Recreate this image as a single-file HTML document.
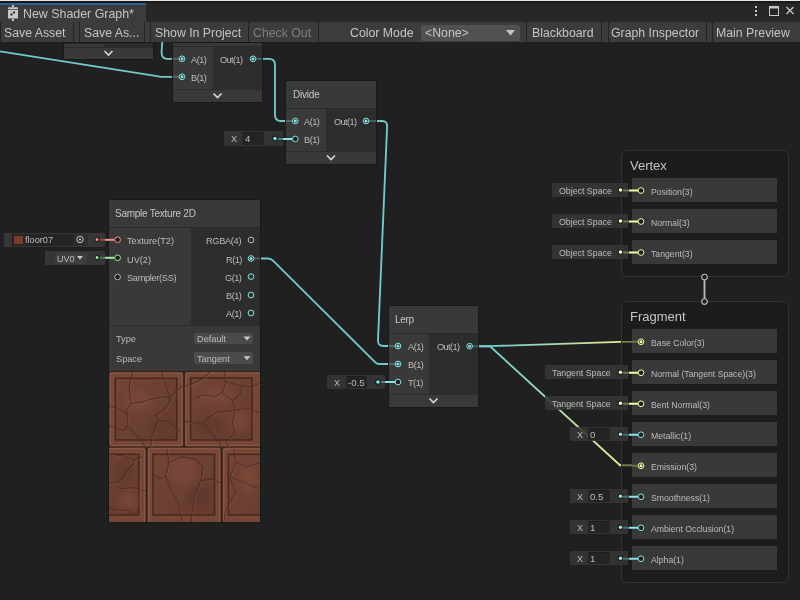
<!DOCTYPE html>
<html><head><meta charset="utf-8"><style>
html,body{margin:0;padding:0;width:800px;height:600px;overflow:hidden;background:#202020;font-family:"Liberation Sans", sans-serif;}
#g div, #top div{position:absolute;box-sizing:border-box;}
body{-webkit-font-smoothing:antialiased;}
.t{white-space:nowrap;will-change:transform;}
svg{position:absolute;left:0;top:0;}
</style></head><body>
<div id="g" style="position:absolute;left:0;top:0;width:800px;height:600px;">
<svg width="800" height="600" style="z-index:1"><defs><linearGradient id="g1" x1="490" y1="0" x2="620" y2="0" gradientUnits="userSpaceOnUse"><stop offset="0" stop-color="#70cbcf"/><stop offset="1" stop-color="#e2ea8e"/></linearGradient><linearGradient id="g2" x1="490" y1="346" x2="620" y2="465" gradientUnits="userSpaceOnUse"><stop offset="0" stop-color="#70cbcf"/><stop offset="1" stop-color="#e2ea8e"/></linearGradient></defs><path d="M0 51.3 L157 76.2 Q159 76.8 161 76.8 L173 76.8" fill="none" stroke="#70cbcf" stroke-width="1.85" stroke-linejoin="round"/><path d="M162.4 40 L161.6 52 Q161.4 58.8 167 58.8 L173 58.8" fill="none" stroke="#70cbcf" stroke-width="1.85" stroke-linejoin="round"/><path d="M262 58.8 L269 58.8 Q275 58.8 275 64.8 L275 115 Q275 121 281 121 L286 121" fill="none" stroke="#70cbcf" stroke-width="1.85" stroke-linejoin="round"/><path d="M376 121 L382 121 Q387.3 121 387.1 126.5 L378 340 Q377.8 346 383.5 346 L389 346" fill="none" stroke="#70cbcf" stroke-width="1.85" stroke-linejoin="round"/><path d="M260 258.5 L268 258.5 Q271 258.5 273 260.7 L374.8 361.8 Q376.8 364 379.8 364 L389 364" fill="none" stroke="#70cbcf" stroke-width="1.85" stroke-linejoin="round"/><path d="M478 346.2 L490 346.2 L620 341.8 L632 341.8" fill="none" stroke="url(#g1)" stroke-width="1.85" stroke-linejoin="round"/><path d="M478 346.2 L490 346.2 L620 465.2 L632 465.2" fill="none" stroke="url(#g2)" stroke-width="1.85" stroke-linejoin="round"/></svg>
<div style="position:absolute;left:0;top:0;width:800px;height:600px;z-index:2">
<div style="left:63px;top:42px;width:91px;height:18px;background:#191919;"></div><div style="left:64px;top:43px;width:40px;height:4px;background:#393939;"></div><div style="left:104px;top:43px;width:49px;height:4px;background:#2d2d2d;"></div><div style="left:64px;top:43px;width:89px;height:1px;background:#2a2a2a;"></div><div style="left:64px;top:47px;width:89px;height:12px;background:#393939;"></div><div style="left:64px;top:47px;width:89px;height:1px;background:#2c2c2c;"></div><div style="left:172px;top:42px;width:91px;height:61px;background:#191919;"></div><div style="left:173px;top:43px;width:89px;height:3px;background:#393939;"></div><div style="left:173px;top:46px;width:40px;height:43px;background:#393939;"></div><div style="left:213px;top:46px;width:49px;height:43px;background:#2d2d2d;"></div><div style="left:173px;top:46px;width:89px;height:1px;background:#2a2a2a;"></div><div style="left:173px;top:89px;width:89px;height:13px;background:#393939;"></div><div style="left:173px;top:89px;width:89px;height:1px;background:#2c2c2c;"></div><div class="t" style="left:191px;top:52.30px;font-size:9.2px;line-height:16px;color:#bcbcbc;letter-spacing:-0.5px;">A(1)</div><div class="t" style="left:191px;top:70.30px;font-size:9.2px;line-height:16px;color:#bcbcbc;letter-spacing:-0.5px;">B(1)</div><div class="t" style="left:220px;top:52.30px;font-size:9.2px;line-height:16px;color:#bcbcbc;letter-spacing:-0.6px;">Out(1)</div><div style="left:285px;top:80px;width:92px;height:85px;background:#191919;"></div><div style="left:286px;top:81px;width:90px;height:27px;background:#393939;"></div><div style="left:286px;top:108px;width:40px;height:43px;background:#393939;"></div><div style="left:326px;top:108px;width:50px;height:43px;background:#2d2d2d;"></div><div style="left:286px;top:108px;width:90px;height:1px;background:#2a2a2a;"></div><div style="left:286px;top:151px;width:90px;height:13px;background:#393939;"></div><div style="left:286px;top:151px;width:90px;height:1px;background:#2c2c2c;"></div><div class="t" style="left:292.7px;top:87.30px;font-size:10px;line-height:16px;color:#c4c4c4;letter-spacing:-0.2px;">Divide</div><div class="t" style="left:304px;top:114.30px;font-size:9.2px;line-height:16px;color:#bcbcbc;letter-spacing:-0.5px;">A(1)</div><div class="t" style="left:304px;top:132.30px;font-size:9.2px;line-height:16px;color:#bcbcbc;letter-spacing:-0.5px;">B(1)</div><div class="t" style="left:334px;top:114.30px;font-size:9.2px;line-height:16px;color:#bcbcbc;letter-spacing:-0.6px;">Out(1)</div><div style="left:388px;top:305px;width:91px;height:103px;background:#191919;"></div><div style="left:389px;top:306px;width:89px;height:27px;background:#393939;"></div><div style="left:389px;top:333px;width:40px;height:61px;background:#393939;"></div><div style="left:429px;top:333px;width:49px;height:61px;background:#2d2d2d;"></div><div style="left:389px;top:333px;width:89px;height:1px;background:#2a2a2a;"></div><div style="left:389px;top:394px;width:89px;height:13px;background:#393939;"></div><div style="left:389px;top:394px;width:89px;height:1px;background:#2c2c2c;"></div><div class="t" style="left:395.3px;top:312.30px;font-size:10px;line-height:16px;color:#c4c4c4;letter-spacing:-0.3px;">Lerp</div><div class="t" style="left:408px;top:339.30px;font-size:9.2px;line-height:16px;color:#bcbcbc;letter-spacing:-0.5px;">A(1)</div><div class="t" style="left:408px;top:357.30px;font-size:9.2px;line-height:16px;color:#bcbcbc;letter-spacing:-0.5px;">B(1)</div><div class="t" style="left:408px;top:375.30px;font-size:9.2px;line-height:16px;color:#bcbcbc;letter-spacing:-0.5px;">T(1)</div><div class="t" style="left:437px;top:339.30px;font-size:9.2px;line-height:16px;color:#bcbcbc;letter-spacing:-0.6px;">Out(1)</div><div style="left:108px;top:199px;width:153px;height:324px;background:#191919;"></div><div style="left:109px;top:200px;width:151px;height:27px;background:#393939;"></div><div style="left:109px;top:227px;width:82px;height:98px;background:#393939;"></div><div style="left:191px;top:227px;width:69px;height:98px;background:#2d2d2d;"></div><div style="left:109px;top:227px;width:151px;height:1px;background:#2a2a2a;"></div><div style="left:109px;top:325px;width:151px;height:46px;background:#393939;"></div><div style="left:109px;top:325px;width:151px;height:1px;background:#2c2c2c;"></div><div class="t" style="left:114.6px;top:206.40px;font-size:10px;line-height:16px;color:#c4c4c4;letter-spacing:-0.25px;">Sample Texture 2D</div><div class="t" style="left:127px;top:233.30px;font-size:9.2px;line-height:16px;color:#bcbcbc;">Texture(T2)</div><div class="t" style="left:127px;top:251.80px;font-size:9.2px;line-height:16px;color:#bcbcbc;">UV(2)</div><div class="t" style="left:127px;top:270.30px;font-size:9.2px;line-height:16px;color:#bcbcbc;letter-spacing:-0.3px;">Sampler(SS)</div><div class="t" style="right:558.5px;top:233.30px;font-size:9.2px;line-height:16px;color:#bcbcbc;letter-spacing:-0.3px;">RGBA(4)</div><div class="t" style="right:558.5px;top:251.80px;font-size:9.2px;line-height:16px;color:#bcbcbc;letter-spacing:-0.5px;">R(1)</div><div class="t" style="right:558.5px;top:269.80px;font-size:9.2px;line-height:16px;color:#bcbcbc;letter-spacing:-0.5px;">G(1)</div><div class="t" style="right:558.5px;top:288.30px;font-size:9.2px;line-height:16px;color:#bcbcbc;letter-spacing:-0.5px;">B(1)</div><div class="t" style="right:558.5px;top:306.30px;font-size:9.2px;line-height:16px;color:#bcbcbc;letter-spacing:-0.5px;">A(1)</div><div class="t" style="left:116px;top:331.20px;font-size:9.2px;line-height:16px;color:#bcbcbc;">Type</div><div class="t" style="left:116px;top:350.80px;font-size:9.2px;line-height:16px;color:#bcbcbc;">Space</div><div style="left:194px;top:332.6px;width:59px;height:11.5px;background:#4b4b4b;border-radius:2px;"></div><div class="t" style="left:197px;top:331.00px;font-size:9.2px;line-height:16px;color:#bcbcbc;">Default</div><div style="left:194px;top:352.2px;width:59px;height:11.5px;background:#4b4b4b;border-radius:2px;"></div><div class="t" style="left:197px;top:350.60px;font-size:9.2px;line-height:16px;color:#bcbcbc;">Tangent</div><svg width="151" height="151" style="left:109px;top:371px"><defs><filter id="tb" filterUnits="userSpaceOnUse" x="-10" y="-10" width="171" height="171"><feGaussianBlur stdDeviation="0.55"/></filter><filter id="tb2" filterUnits="userSpaceOnUse" x="-10" y="-10" width="171" height="171"><feGaussianBlur stdDeviation="3"/></filter><linearGradient id="tg" x1="0" y1="0" x2="1" y2="1"><stop offset="0" stop-color="#734536"/><stop offset="1" stop-color="#663b2e"/></linearGradient></defs><g filter="url(#tb)"><rect x="0" y="0" width="151" height="151" fill="#33201a"/><rect x="0.3" y="1" width="73.9" height="74.6" rx="2" fill="#744436"/><rect x="1.5" y="2.2" width="71.5" height="72.19999999999999" rx="2" fill="none" stroke="#93604f" stroke-width="1.3" stroke-opacity="0.75"/><rect x="4.3" y="5.3" width="65.4" height="65.7" fill="none" stroke="#7f4b3d" stroke-width="1.1"/><rect x="6.3" y="7.3" width="61.400000000000006" height="61.7" fill="url(#tg)"/><rect x="6.3" y="7.3" width="61.400000000000006" height="61.7" fill="none" stroke="#45291f" stroke-width="1.5"/><rect x="75.8" y="1" width="77.2" height="74.6" rx="2" fill="#744436"/><rect x="77.0" y="2.2" width="74.8" height="72.19999999999999" rx="2" fill="none" stroke="#93604f" stroke-width="1.3" stroke-opacity="0.75"/><rect x="79.7" y="5" width="65.3" height="66" fill="none" stroke="#7f4b3d" stroke-width="1.1"/><rect x="81.7" y="7" width="61.3" height="62" fill="url(#tg)"/><rect x="81.7" y="7" width="61.3" height="62" fill="none" stroke="#45291f" stroke-width="1.5"/><rect x="-30" y="76.6" width="66.7" height="76.4" rx="2" fill="#744436"/><rect x="-28.8" y="77.8" width="64.3" height="74.0" rx="2" fill="none" stroke="#93604f" stroke-width="1.3" stroke-opacity="0.75"/><rect x="-26" y="81.3" width="57.7" height="64.7" fill="none" stroke="#7f4b3d" stroke-width="1.1"/><rect x="-24" y="83.3" width="53.7" height="60.7" fill="url(#tg)"/><rect x="-24" y="83.3" width="53.7" height="60.7" fill="none" stroke="#45291f" stroke-width="1.5"/><rect x="38.5" y="76.6" width="73.2" height="76.4" rx="2" fill="#744436"/><rect x="39.7" y="77.8" width="70.8" height="74.0" rx="2" fill="none" stroke="#93604f" stroke-width="1.3" stroke-opacity="0.75"/><rect x="41.9" y="81.3" width="65.6" height="64.7" fill="none" stroke="#7f4b3d" stroke-width="1.1"/><rect x="43.9" y="83.3" width="61.6" height="60.7" fill="url(#tg)"/><rect x="43.9" y="83.3" width="61.6" height="60.7" fill="none" stroke="#45291f" stroke-width="1.5"/><rect x="113.6" y="76.6" width="76.4" height="76.4" rx="2" fill="#744436"/><rect x="114.8" y="77.8" width="74.0" height="74.0" rx="2" fill="none" stroke="#93604f" stroke-width="1.3" stroke-opacity="0.75"/><rect x="117.4" y="81.3" width="65.6" height="64.7" fill="none" stroke="#7f4b3d" stroke-width="1.1"/><rect x="119.4" y="83.3" width="61.599999999999994" height="60.7" fill="url(#tg)"/><rect x="119.4" y="83.3" width="61.599999999999994" height="60.7" fill="none" stroke="#45291f" stroke-width="1.5"/></g><g filter="url(#tb2)" opacity="0.7"><ellipse cx="30" cy="30" rx="14" ry="10" fill="#7d4a3c"/><ellipse cx="50" cy="55" rx="10" ry="8" fill="#5f372b"/><ellipse cx="110" cy="25" rx="16" ry="9" fill="#7b493b"/><ellipse cx="100" cy="55" rx="14" ry="10" fill="#60382c"/><ellipse cx="130" cy="50" rx="10" ry="12" fill="#7a483a"/><ellipse cx="15" cy="100" rx="10" ry="12" fill="#60382c"/><ellipse cx="75" cy="100" rx="12" ry="15" fill="#7d4a3c"/><ellipse cx="90" cy="125" rx="12" ry="10" fill="#5d362a"/><ellipse cx="140" cy="110" rx="9" ry="14" fill="#7b493b"/><ellipse cx="20" cy="130" rx="10" ry="8" fill="#7d4a3c"/></g><g transform="translate(0.9,0.9)" filter="url(#tb)"><path d="M24 1 L20.3 13.7 L21 25.7 L22.3 32.3 L17.7 39 L19 55 L25.7 63 L33.7 71.7 L36 76" fill="none" stroke="#98624f" stroke-width="0.9" stroke-opacity="0.45" stroke-linejoin="round"/><path d="M52.3 1 L57.7 16.3 L61.7 29.7 L55 39 L47 44.3 L49.7 49.7 L43 65.7 L41.7 76" fill="none" stroke="#98624f" stroke-width="0.9" stroke-opacity="0.45" stroke-linejoin="round"/><path d="M22.3 32.3 L33.7 31 L44.3 27.7 L57.7 25.7 L61.7 29.7" fill="none" stroke="#98624f" stroke-width="0.9" stroke-opacity="0.45" stroke-linejoin="round"/><path d="M0 35 L11 39 L17.7 43" fill="none" stroke="#98624f" stroke-width="0.9" stroke-opacity="0.45" stroke-linejoin="round"/><path d="M0 55 L7 57.7 L15 60 L19 55" fill="none" stroke="#98624f" stroke-width="0.9" stroke-opacity="0.45" stroke-linejoin="round"/><path d="M61.7 25.7 L67 20 L74 15" fill="none" stroke="#98624f" stroke-width="0.9" stroke-opacity="0.45" stroke-linejoin="round"/><path d="M49.7 49.7 L60.3 51 L71 60.3" fill="none" stroke="#98624f" stroke-width="0.9" stroke-opacity="0.45" stroke-linejoin="round"/><path d="M101 1 L93 8.3 L81 13.7 L74 16" fill="none" stroke="#98624f" stroke-width="0.9" stroke-opacity="0.45" stroke-linejoin="round"/><path d="M115.7 1 L117 12.3 L113 21.7 L106.3 25.7 L95 24 L85 28" fill="none" stroke="#98624f" stroke-width="0.9" stroke-opacity="0.45" stroke-linejoin="round"/><path d="M76 50 L81 51 L93 53.7 L99.7 47 L107.7 41.7 L118.3 40.3 L127.7 39 L139.7 37.7 L150.3 41.7" fill="none" stroke="#98624f" stroke-width="0.9" stroke-opacity="0.45" stroke-linejoin="round"/><path d="M126.3 39 L123.7 52.3 L126.3 61.7 L117 71 L119.7 76" fill="none" stroke="#98624f" stroke-width="0.9" stroke-opacity="0.45" stroke-linejoin="round"/><path d="M95.7 53 L102.3 63 L110.3 71 L112 76" fill="none" stroke="#98624f" stroke-width="0.9" stroke-opacity="0.45" stroke-linejoin="round"/><path d="M113 21.7 L123.7 29.7 L131.7 23 L133 15 L142.3 16.3 L151 12" fill="none" stroke="#98624f" stroke-width="0.9" stroke-opacity="0.45" stroke-linejoin="round"/><path d="M117 11 L133 15" fill="none" stroke="#98624f" stroke-width="0.9" stroke-opacity="0.45" stroke-linejoin="round"/><path d="M123.7 29.7 L126.3 37.7" fill="none" stroke="#98624f" stroke-width="0.9" stroke-opacity="0.45" stroke-linejoin="round"/><path d="M0 82.7 L12.3 84.7 L19 87.3 L25.7 88.7 L33.7 86" fill="none" stroke="#98624f" stroke-width="0.9" stroke-opacity="0.45" stroke-linejoin="round"/><path d="M25.7 88.7 L24.3 94 L19 99.3 L13.7 107.3 L9.7 111.3 L0 112.7" fill="none" stroke="#98624f" stroke-width="0.9" stroke-opacity="0.45" stroke-linejoin="round"/><path d="M7 115.3 L12.3 118 L23 116.7 L29.7 118 L36.3 120.7" fill="none" stroke="#98624f" stroke-width="0.9" stroke-opacity="0.45" stroke-linejoin="round"/><path d="M0 136.7 L7 139.3 L17.7 139.3 L25.7 144.7" fill="none" stroke="#98624f" stroke-width="0.9" stroke-opacity="0.45" stroke-linejoin="round"/><path d="M58 78 L60 92 L57 105 L62 118 L70 132 L73 151" fill="none" stroke="#98624f" stroke-width="0.9" stroke-opacity="0.45" stroke-linejoin="round"/><path d="M60 92 L72 86 L86 88 L94 96 L92 110 L86 124 L82 151" fill="none" stroke="#98624f" stroke-width="0.9" stroke-opacity="0.45" stroke-linejoin="round"/><path d="M92 110 L104 108 L111 112" fill="none" stroke="#98624f" stroke-width="0.9" stroke-opacity="0.45" stroke-linejoin="round"/><path d="M44 104 L52 108 L57 105" fill="none" stroke="#98624f" stroke-width="0.9" stroke-opacity="0.45" stroke-linejoin="round"/><path d="M125 78 L127 92 L121 106 L127 122 L117 138 L115 151" fill="none" stroke="#98624f" stroke-width="0.9" stroke-opacity="0.45" stroke-linejoin="round"/><path d="M127 92 L138 96 L151 92" fill="none" stroke="#98624f" stroke-width="0.9" stroke-opacity="0.45" stroke-linejoin="round"/><path d="M121 106 L136 112 L151 118" fill="none" stroke="#98624f" stroke-width="0.9" stroke-opacity="0.45" stroke-linejoin="round"/></g><path d="M24 1 L20.3 13.7 L21 25.7 L22.3 32.3 L17.7 39 L19 55 L25.7 63 L33.7 71.7 L36 76" fill="none" stroke="#4a2b21" stroke-width="1.3" stroke-opacity="0.7" stroke-linejoin="round" filter="url(#tb)"/><path d="M52.3 1 L57.7 16.3 L61.7 29.7 L55 39 L47 44.3 L49.7 49.7 L43 65.7 L41.7 76" fill="none" stroke="#4a2b21" stroke-width="1.3" stroke-opacity="0.7" stroke-linejoin="round" filter="url(#tb)"/><path d="M22.3 32.3 L33.7 31 L44.3 27.7 L57.7 25.7 L61.7 29.7" fill="none" stroke="#4a2b21" stroke-width="1.3" stroke-opacity="0.7" stroke-linejoin="round" filter="url(#tb)"/><path d="M0 35 L11 39 L17.7 43" fill="none" stroke="#4a2b21" stroke-width="1.3" stroke-opacity="0.7" stroke-linejoin="round" filter="url(#tb)"/><path d="M0 55 L7 57.7 L15 60 L19 55" fill="none" stroke="#4a2b21" stroke-width="1.3" stroke-opacity="0.7" stroke-linejoin="round" filter="url(#tb)"/><path d="M61.7 25.7 L67 20 L74 15" fill="none" stroke="#4a2b21" stroke-width="1.3" stroke-opacity="0.7" stroke-linejoin="round" filter="url(#tb)"/><path d="M49.7 49.7 L60.3 51 L71 60.3" fill="none" stroke="#4a2b21" stroke-width="1.3" stroke-opacity="0.7" stroke-linejoin="round" filter="url(#tb)"/><path d="M101 1 L93 8.3 L81 13.7 L74 16" fill="none" stroke="#4a2b21" stroke-width="1.3" stroke-opacity="0.7" stroke-linejoin="round" filter="url(#tb)"/><path d="M115.7 1 L117 12.3 L113 21.7 L106.3 25.7 L95 24 L85 28" fill="none" stroke="#4a2b21" stroke-width="1.3" stroke-opacity="0.7" stroke-linejoin="round" filter="url(#tb)"/><path d="M76 50 L81 51 L93 53.7 L99.7 47 L107.7 41.7 L118.3 40.3 L127.7 39 L139.7 37.7 L150.3 41.7" fill="none" stroke="#4a2b21" stroke-width="1.3" stroke-opacity="0.7" stroke-linejoin="round" filter="url(#tb)"/><path d="M126.3 39 L123.7 52.3 L126.3 61.7 L117 71 L119.7 76" fill="none" stroke="#4a2b21" stroke-width="1.3" stroke-opacity="0.7" stroke-linejoin="round" filter="url(#tb)"/><path d="M95.7 53 L102.3 63 L110.3 71 L112 76" fill="none" stroke="#4a2b21" stroke-width="1.3" stroke-opacity="0.7" stroke-linejoin="round" filter="url(#tb)"/><path d="M113 21.7 L123.7 29.7 L131.7 23 L133 15 L142.3 16.3 L151 12" fill="none" stroke="#4a2b21" stroke-width="1.3" stroke-opacity="0.7" stroke-linejoin="round" filter="url(#tb)"/><path d="M117 11 L133 15" fill="none" stroke="#4a2b21" stroke-width="1.3" stroke-opacity="0.7" stroke-linejoin="round" filter="url(#tb)"/><path d="M123.7 29.7 L126.3 37.7" fill="none" stroke="#4a2b21" stroke-width="1.3" stroke-opacity="0.7" stroke-linejoin="round" filter="url(#tb)"/><path d="M0 82.7 L12.3 84.7 L19 87.3 L25.7 88.7 L33.7 86" fill="none" stroke="#4a2b21" stroke-width="1.3" stroke-opacity="0.7" stroke-linejoin="round" filter="url(#tb)"/><path d="M25.7 88.7 L24.3 94 L19 99.3 L13.7 107.3 L9.7 111.3 L0 112.7" fill="none" stroke="#4a2b21" stroke-width="1.3" stroke-opacity="0.7" stroke-linejoin="round" filter="url(#tb)"/><path d="M7 115.3 L12.3 118 L23 116.7 L29.7 118 L36.3 120.7" fill="none" stroke="#4a2b21" stroke-width="1.3" stroke-opacity="0.7" stroke-linejoin="round" filter="url(#tb)"/><path d="M0 136.7 L7 139.3 L17.7 139.3 L25.7 144.7" fill="none" stroke="#4a2b21" stroke-width="1.3" stroke-opacity="0.7" stroke-linejoin="round" filter="url(#tb)"/><path d="M58 78 L60 92 L57 105 L62 118 L70 132 L73 151" fill="none" stroke="#4a2b21" stroke-width="1.3" stroke-opacity="0.7" stroke-linejoin="round" filter="url(#tb)"/><path d="M60 92 L72 86 L86 88 L94 96 L92 110 L86 124 L82 151" fill="none" stroke="#4a2b21" stroke-width="1.3" stroke-opacity="0.7" stroke-linejoin="round" filter="url(#tb)"/><path d="M92 110 L104 108 L111 112" fill="none" stroke="#4a2b21" stroke-width="1.3" stroke-opacity="0.7" stroke-linejoin="round" filter="url(#tb)"/><path d="M44 104 L52 108 L57 105" fill="none" stroke="#4a2b21" stroke-width="1.3" stroke-opacity="0.7" stroke-linejoin="round" filter="url(#tb)"/><path d="M125 78 L127 92 L121 106 L127 122 L117 138 L115 151" fill="none" stroke="#4a2b21" stroke-width="1.3" stroke-opacity="0.7" stroke-linejoin="round" filter="url(#tb)"/><path d="M127 92 L138 96 L151 92" fill="none" stroke="#4a2b21" stroke-width="1.3" stroke-opacity="0.7" stroke-linejoin="round" filter="url(#tb)"/><path d="M121 106 L136 112 L151 118" fill="none" stroke="#4a2b21" stroke-width="1.3" stroke-opacity="0.7" stroke-linejoin="round" filter="url(#tb)"/></svg><div style="left:224px;top:131px;width:59px;height:15px;background:rgba(54,54,54,0.88);border-radius:1px;"></div><div class="t" style="left:231px;top:131.30px;font-size:9.2px;line-height:16px;color:#bcbcbc;">X</div><div style="left:242px;top:132px;width:22px;height:13px;background:#242424;border-radius:2px;border-top:1px solid #1b1b1b;box-sizing:border-box;"></div><div class="t" style="left:244.5px;top:131.30px;font-size:9.6px;line-height:16px;color:#bcbcbc;">4</div><div style="left:327px;top:375px;width:58px;height:14px;background:rgba(54,54,54,0.88);border-radius:1px;"></div><div class="t" style="left:334px;top:374.80px;font-size:9.2px;line-height:16px;color:#bcbcbc;">X</div><div style="left:345.5px;top:376px;width:21.5px;height:12px;background:#242424;border-radius:2px;border-top:1px solid #1b1b1b;box-sizing:border-box;"></div><div class="t" style="left:348.0px;top:374.80px;font-size:9.6px;line-height:16px;color:#bcbcbc;">-0.5</div><div style="left:4px;top:233px;width:101px;height:14px;background:rgba(56,56,56,0.9);"></div><div style="left:12px;top:234px;width:61px;height:12px;background:#242424;"></div><div style="left:73px;top:234px;width:14.5px;height:12px;background:#2e2e2e;border-radius:2px;"></div><div style="left:14px;top:236px;width:9px;height:8px;background:#75402e;"></div><div class="t" style="left:25px;top:232.20px;font-size:9.2px;line-height:16px;color:#bcbcbc;">floor07</div><div style="left:45px;top:251px;width:60px;height:14px;background:rgba(56,56,56,0.9);"></div><div style="left:54.5px;top:252.5px;width:32.5px;height:11px;background:#3e3e3e;border-radius:2px;"></div><div class="t" style="left:57px;top:250.80px;font-size:9.0px;line-height:16px;color:#bcbcbc;">UV0</div><div style="left:621px;top:149.5px;width:168px;height:127.5px;border:1px solid #333333;border-radius:6px;background:rgba(26,26,26,0.55);"></div><div class="t" style="left:630px;top:157.50px;font-size:13px;line-height:16px;color:#c4c4c4;">Vertex</div><div style="left:621px;top:301px;width:168px;height:281.5px;border:1px solid #333333;border-radius:6px;background:rgba(26,26,26,0.55);"></div><div class="t" style="left:630px;top:309.00px;font-size:13px;line-height:16px;color:#c4c4c4;">Fragment</div><div style="left:632px;top:178px;width:145px;height:24px;background:#393939;"></div><div class="t" style="left:650.5px;top:183.80px;font-size:8.7px;line-height:16px;color:#bcbcbc;">Position(3)</div><div style="left:632px;top:209px;width:145px;height:24px;background:#393939;"></div><div class="t" style="left:650.5px;top:214.80px;font-size:8.7px;line-height:16px;color:#bcbcbc;">Normal(3)</div><div style="left:632px;top:240px;width:145px;height:24px;background:#393939;"></div><div class="t" style="left:650.5px;top:245.80px;font-size:8.7px;line-height:16px;color:#bcbcbc;">Tangent(3)</div><div style="left:632px;top:329px;width:145px;height:24px;background:#393939;"></div><div class="t" style="left:650.5px;top:334.80px;font-size:8.7px;line-height:16px;color:#bcbcbc;">Base Color(3)</div><div style="left:632px;top:360px;width:145px;height:24px;background:#393939;"></div><div class="t" style="left:650.5px;top:365.80px;font-size:8.7px;line-height:16px;color:#bcbcbc;">Normal (Tangent Space)(3)</div><div style="left:632px;top:391px;width:145px;height:24px;background:#393939;"></div><div class="t" style="left:650.5px;top:396.80px;font-size:8.7px;line-height:16px;color:#bcbcbc;">Bent Normal(3)</div><div style="left:632px;top:422px;width:145px;height:24px;background:#393939;"></div><div class="t" style="left:650.5px;top:427.80px;font-size:8.7px;line-height:16px;color:#bcbcbc;">Metallic(1)</div><div style="left:632px;top:453px;width:145px;height:24px;background:#393939;"></div><div class="t" style="left:650.5px;top:458.80px;font-size:8.7px;line-height:16px;color:#bcbcbc;">Emission(3)</div><div style="left:632px;top:484px;width:145px;height:24px;background:#393939;"></div><div class="t" style="left:650.5px;top:489.80px;font-size:8.7px;line-height:16px;color:#bcbcbc;">Smoothness(1)</div><div style="left:632px;top:515px;width:145px;height:24px;background:#393939;"></div><div class="t" style="left:650.5px;top:520.80px;font-size:8.7px;line-height:16px;color:#bcbcbc;">Ambient Occlusion(1)</div><div style="left:632px;top:546px;width:145px;height:24px;background:#393939;"></div><div class="t" style="left:650.5px;top:551.80px;font-size:8.7px;line-height:16px;color:#bcbcbc;">Alpha(1)</div><div style="left:552px;top:183.0px;width:76px;height:14px;background:rgba(54,54,54,0.88);"></div><div class="t" style="left:559px;top:182.80px;font-size:8.8px;line-height:16px;color:#bcbcbc;">Object Space</div><div style="left:552px;top:214.0px;width:76px;height:14px;background:rgba(54,54,54,0.88);"></div><div class="t" style="left:559px;top:213.80px;font-size:8.8px;line-height:16px;color:#bcbcbc;">Object Space</div><div style="left:552px;top:245.0px;width:76px;height:14px;background:rgba(54,54,54,0.88);"></div><div class="t" style="left:559px;top:244.80px;font-size:8.8px;line-height:16px;color:#bcbcbc;">Object Space</div><div style="left:545px;top:365.25px;width:83px;height:14px;background:rgba(54,54,54,0.88);"></div><div class="t" style="left:552px;top:365.05px;font-size:8.8px;line-height:16px;color:#bcbcbc;">Tangent Space</div><div style="left:545px;top:396.25px;width:83px;height:14px;background:rgba(54,54,54,0.88);"></div><div class="t" style="left:552px;top:396.05px;font-size:8.8px;line-height:16px;color:#bcbcbc;">Tangent Space</div><div style="left:570px;top:427.25px;width:58px;height:14.0px;background:rgba(54,54,54,0.88);border-radius:1px;"></div><div class="t" style="left:577px;top:427.05px;font-size:9.2px;line-height:16px;color:#bcbcbc;">X</div><div style="left:587.5px;top:428.25px;width:22.5px;height:12.0px;background:#242424;border-radius:2px;border-top:1px solid #1b1b1b;box-sizing:border-box;"></div><div class="t" style="left:590.0px;top:427.05px;font-size:9.6px;line-height:16px;color:#bcbcbc;">0</div><div style="left:570px;top:489.25px;width:58px;height:14.0px;background:rgba(54,54,54,0.88);border-radius:1px;"></div><div class="t" style="left:577px;top:489.05px;font-size:9.2px;line-height:16px;color:#bcbcbc;">X</div><div style="left:587.5px;top:490.25px;width:22.5px;height:12.0px;background:#242424;border-radius:2px;border-top:1px solid #1b1b1b;box-sizing:border-box;"></div><div class="t" style="left:590.0px;top:489.05px;font-size:9.6px;line-height:16px;color:#bcbcbc;">0.5</div><div style="left:570px;top:520.25px;width:58px;height:14.0px;background:rgba(54,54,54,0.88);border-radius:1px;"></div><div class="t" style="left:577px;top:520.05px;font-size:9.2px;line-height:16px;color:#bcbcbc;">X</div><div style="left:587.5px;top:521.25px;width:22.5px;height:12.0px;background:#242424;border-radius:2px;border-top:1px solid #1b1b1b;box-sizing:border-box;"></div><div class="t" style="left:590.0px;top:520.05px;font-size:9.6px;line-height:16px;color:#bcbcbc;">1</div><div style="left:570px;top:551.25px;width:58px;height:14.0px;background:rgba(54,54,54,0.88);border-radius:1px;"></div><div class="t" style="left:577px;top:551.05px;font-size:9.2px;line-height:16px;color:#bcbcbc;">X</div><div style="left:587.5px;top:552.25px;width:22.5px;height:12.0px;background:#242424;border-radius:2px;border-top:1px solid #1b1b1b;box-sizing:border-box;"></div><div class="t" style="left:590.0px;top:551.05px;font-size:9.6px;line-height:16px;color:#bcbcbc;">1</div>
</div>
<svg width="800" height="600" style="z-index:3"><path d="M104.5 51.0 L108.5 55.0 L112.5 51.0" fill="none" stroke="#d8d8d8" stroke-width="1.6"/><path d="M213.5 93.5 L217.5 97.5 L221.5 93.5" fill="none" stroke="#d8d8d8" stroke-width="1.6"/><path d="M327.0 155.5 L331.0 159.5 L335.0 155.5" fill="none" stroke="#d8d8d8" stroke-width="1.6"/><path d="M429.5 398.5 L433.5 402.5 L437.5 398.5" fill="none" stroke="#d8d8d8" stroke-width="1.6"/><path d="M243.5 336.6 L250.5 336.6 L247 340.6 Z" fill="#c8c8c8"/><path d="M243.5 356.2 L250.5 356.2 L247 360.2 Z" fill="#c8c8c8"/><circle cx="275" cy="138.5" r="2.8" fill="#1a1a1a"/><circle cx="275" cy="138.5" r="1.8" fill="#84e4e7"/><circle cx="378" cy="382.0" r="2.8" fill="#1a1a1a"/><circle cx="378" cy="382.0" r="1.8" fill="#84e4e7"/><circle cx="80" cy="239.5" r="3.2" fill="none" stroke="#c8c8c8" stroke-width="1"/><circle cx="80" cy="239.5" r="1.1" fill="#c8c8c8"/><circle cx="97" cy="239.5" r="2.6" fill="#1a1a1a"/><circle cx="97" cy="239.5" r="1.5" fill="#ff8b8b"/><path d="M77 256 L83 256 L80 259.5 Z" fill="#c8c8c8"/><circle cx="97" cy="257.6" r="2.6" fill="#1a1a1a"/><circle cx="97" cy="257.6" r="1.5" fill="#9aef92"/><line x1="173" y1="58.8" x2="179" y2="58.8" stroke="#84e4e7" stroke-opacity="0.28" stroke-width="2"/><circle cx="182" cy="58.8" r="2.85" fill="none" stroke="#84e4e7" stroke-width="1.0"/><circle cx="182" cy="58.8" r="1.5" fill="#84e4e7"/><line x1="173" y1="76.8" x2="179" y2="76.8" stroke="#84e4e7" stroke-opacity="0.28" stroke-width="2"/><circle cx="182" cy="76.8" r="2.85" fill="none" stroke="#84e4e7" stroke-width="1.0"/><circle cx="182" cy="76.8" r="1.5" fill="#84e4e7"/><line x1="256" y1="58.8" x2="262" y2="58.8" stroke="#84e4e7" stroke-opacity="0.28" stroke-width="2"/><circle cx="253" cy="58.8" r="2.85" fill="none" stroke="#84e4e7" stroke-width="1.0"/><circle cx="253" cy="58.8" r="1.5" fill="#84e4e7"/><line x1="286" y1="121" x2="292" y2="121" stroke="#84e4e7" stroke-opacity="0.28" stroke-width="2"/><circle cx="295.3" cy="121" r="2.85" fill="none" stroke="#84e4e7" stroke-width="1.0"/><circle cx="295.3" cy="121" r="1.5" fill="#84e4e7"/><line x1="278" y1="139" x2="283" y2="139" stroke="#84e4e766" stroke-width="2"/><line x1="283" y1="139" x2="292" y2="139" stroke="#84e4e7" stroke-width="2"/><circle cx="295.3" cy="139" r="2.85" fill="#1d1d1d" stroke="#84e4e7" stroke-width="1.0"/><line x1="369" y1="121" x2="376" y2="121" stroke="#84e4e7" stroke-opacity="0.28" stroke-width="2"/><circle cx="366" cy="121" r="2.85" fill="none" stroke="#84e4e7" stroke-width="1.0"/><circle cx="366" cy="121" r="1.5" fill="#84e4e7"/><line x1="100" y1="239.8" x2="105" y2="239.8" stroke="#ff8b8b55" stroke-width="2"/><line x1="105" y1="239.8" x2="114.5" y2="239.8" stroke="#ff8b8b" stroke-width="2"/><circle cx="117.6" cy="239.8" r="2.85" fill="#1d1d1d" stroke="#ff8b8b" stroke-width="1.0"/><line x1="100" y1="257.8" x2="105" y2="257.8" stroke="#9aef9255" stroke-width="2"/><line x1="105" y1="257.8" x2="114.5" y2="257.8" stroke="#9aef92" stroke-width="2"/><circle cx="117.6" cy="257.8" r="2.85" fill="#1d1d1d" stroke="#9aef92" stroke-width="1.0"/><circle cx="117.6" cy="277" r="2.85" fill="#1d1d1d" stroke="#b0b0b0" stroke-width="1.0"/><circle cx="251" cy="240" r="2.85" fill="none" stroke="#d2aad6" stroke-width="1.0"/><line x1="254" y1="258.5" x2="260" y2="258.5" stroke="#84e4e7" stroke-opacity="0.28" stroke-width="2"/><circle cx="251" cy="258.5" r="2.85" fill="none" stroke="#84e4e7" stroke-width="1.0"/><circle cx="251" cy="258.5" r="1.5" fill="#84e4e7"/><circle cx="251" cy="276.6" r="2.85" fill="none" stroke="#84e4e7" stroke-width="1.0"/><circle cx="251" cy="295" r="2.85" fill="none" stroke="#84e4e7" stroke-width="1.0"/><circle cx="251" cy="313" r="2.85" fill="none" stroke="#84e4e7" stroke-width="1.0"/><line x1="389" y1="346" x2="395" y2="346" stroke="#84e4e7" stroke-opacity="0.28" stroke-width="2"/><circle cx="398" cy="346" r="2.85" fill="none" stroke="#84e4e7" stroke-width="1.0"/><circle cx="398" cy="346" r="1.5" fill="#84e4e7"/><line x1="389" y1="364" x2="395" y2="364" stroke="#84e4e7" stroke-opacity="0.28" stroke-width="2"/><circle cx="398" cy="364" r="2.85" fill="none" stroke="#84e4e7" stroke-width="1.0"/><circle cx="398" cy="364" r="1.5" fill="#84e4e7"/><line x1="381" y1="382" x2="385" y2="382" stroke="#84e4e766" stroke-width="2"/><line x1="385" y1="382" x2="395" y2="382" stroke="#84e4e7" stroke-width="2"/><circle cx="398" cy="382" r="2.85" fill="#1d1d1d" stroke="#84e4e7" stroke-width="1.0"/><line x1="472" y1="346.2" x2="478" y2="346.2" stroke="#84e4e7" stroke-opacity="0.28" stroke-width="2"/><circle cx="469.6" cy="346.2" r="2.85" fill="none" stroke="#84e4e7" stroke-width="1.0"/><circle cx="469.6" cy="346.2" r="1.5" fill="#84e4e7"/><circle cx="620.5" cy="190.0" r="2.8" fill="#1a1a1a"/><circle cx="620.5" cy="190.0" r="1.8" fill="#f6ff9a"/><line x1="623" y1="190.5" x2="629" y2="190.5" stroke="#f6ff9a55" stroke-width="2"/><line x1="629" y1="190.5" x2="638" y2="190.5" stroke="#f6ff9a" stroke-width="2"/><circle cx="641" cy="190.5" r="2.85" fill="#1d1d1d" stroke="#f6ff9a" stroke-width="1.0"/><circle cx="620.5" cy="221.0" r="2.8" fill="#1a1a1a"/><circle cx="620.5" cy="221.0" r="1.8" fill="#f6ff9a"/><line x1="623" y1="221.5" x2="629" y2="221.5" stroke="#f6ff9a55" stroke-width="2"/><line x1="629" y1="221.5" x2="638" y2="221.5" stroke="#f6ff9a" stroke-width="2"/><circle cx="641" cy="221.5" r="2.85" fill="#1d1d1d" stroke="#f6ff9a" stroke-width="1.0"/><circle cx="620.5" cy="252.0" r="2.8" fill="#1a1a1a"/><circle cx="620.5" cy="252.0" r="1.8" fill="#f6ff9a"/><line x1="623" y1="252.5" x2="629" y2="252.5" stroke="#f6ff9a55" stroke-width="2"/><line x1="629" y1="252.5" x2="638" y2="252.5" stroke="#f6ff9a" stroke-width="2"/><circle cx="641" cy="252.5" r="2.85" fill="#1d1d1d" stroke="#f6ff9a" stroke-width="1.0"/><line x1="632" y1="341.75" x2="638" y2="341.75" stroke="#f6ff9a" stroke-opacity="0.28" stroke-width="2"/><circle cx="641" cy="341.75" r="2.85" fill="none" stroke="#f6ff9a" stroke-width="1.0"/><circle cx="641" cy="341.75" r="1.5" fill="#f6ff9a"/><circle cx="620.5" cy="372.25" r="2.8" fill="#1a1a1a"/><circle cx="620.5" cy="372.25" r="1.8" fill="#f6ff9a"/><line x1="623" y1="372.75" x2="629" y2="372.75" stroke="#f6ff9a55" stroke-width="2"/><line x1="629" y1="372.75" x2="638" y2="372.75" stroke="#f6ff9a" stroke-width="2"/><circle cx="641" cy="372.75" r="2.85" fill="#1d1d1d" stroke="#f6ff9a" stroke-width="1.0"/><circle cx="620.5" cy="403.25" r="2.8" fill="#1a1a1a"/><circle cx="620.5" cy="403.25" r="1.8" fill="#f6ff9a"/><line x1="623" y1="403.75" x2="629" y2="403.75" stroke="#f6ff9a55" stroke-width="2"/><line x1="629" y1="403.75" x2="638" y2="403.75" stroke="#f6ff9a" stroke-width="2"/><circle cx="641" cy="403.75" r="2.85" fill="#1d1d1d" stroke="#f6ff9a" stroke-width="1.0"/><circle cx="620.5" cy="434.25" r="2.8" fill="#1a1a1a"/><circle cx="620.5" cy="434.25" r="1.8" fill="#84e4e7"/><line x1="623" y1="434.75" x2="629" y2="434.75" stroke="#84e4e755" stroke-width="2"/><line x1="629" y1="434.75" x2="638" y2="434.75" stroke="#84e4e7" stroke-width="2"/><circle cx="641" cy="434.75" r="2.85" fill="#1d1d1d" stroke="#84e4e7" stroke-width="1.0"/><line x1="632" y1="465.75" x2="638" y2="465.75" stroke="#f6ff9a" stroke-opacity="0.28" stroke-width="2"/><circle cx="641" cy="465.75" r="2.85" fill="none" stroke="#f6ff9a" stroke-width="1.0"/><circle cx="641" cy="465.75" r="1.5" fill="#f6ff9a"/><circle cx="620.5" cy="496.25" r="2.8" fill="#1a1a1a"/><circle cx="620.5" cy="496.25" r="1.8" fill="#84e4e7"/><line x1="623" y1="496.75" x2="629" y2="496.75" stroke="#84e4e755" stroke-width="2"/><line x1="629" y1="496.75" x2="638" y2="496.75" stroke="#84e4e7" stroke-width="2"/><circle cx="641" cy="496.75" r="2.85" fill="#1d1d1d" stroke="#84e4e7" stroke-width="1.0"/><circle cx="620.5" cy="527.25" r="2.8" fill="#1a1a1a"/><circle cx="620.5" cy="527.25" r="1.8" fill="#84e4e7"/><line x1="623" y1="527.75" x2="629" y2="527.75" stroke="#84e4e755" stroke-width="2"/><line x1="629" y1="527.75" x2="638" y2="527.75" stroke="#84e4e7" stroke-width="2"/><circle cx="641" cy="527.75" r="2.85" fill="#1d1d1d" stroke="#84e4e7" stroke-width="1.0"/><circle cx="620.5" cy="558.25" r="2.8" fill="#1a1a1a"/><circle cx="620.5" cy="558.25" r="1.8" fill="#84e4e7"/><line x1="623" y1="558.75" x2="629" y2="558.75" stroke="#84e4e755" stroke-width="2"/><line x1="629" y1="558.75" x2="638" y2="558.75" stroke="#84e4e7" stroke-width="2"/><circle cx="641" cy="558.75" r="2.85" fill="#1d1d1d" stroke="#84e4e7" stroke-width="1.0"/><line x1="704.5" y1="280" x2="704.5" y2="299" stroke="#b8b8b8" stroke-width="1.9"/><circle cx="704.5" cy="277" r="2.8" fill="#1f1f1f" stroke="#b8b8b8" stroke-width="1.1"/><circle cx="704.5" cy="301.6" r="2.8" fill="#1f1f1f" stroke="#b8b8b8" stroke-width="1.1"/></svg>
</div>
<div id="top" style="position:absolute;left:0;top:0;width:800px;height:43px;z-index:10;">
<div style="left:0;top:0;width:800px;height:1px;background:#e6e6e6;"></div>
<div style="left:0;top:1px;width:800px;height:21px;background:#272727;"></div>
<div style="left:0;top:1px;width:800px;height:2px;background:#191919;"></div>
<div style="left:0;top:3px;width:146px;height:19px;background:#3c3c3c;"></div>
<div style="left:0;top:3px;width:146px;height:2px;background:#2e6195;"></div>
<svg width="14" height="18" style="left:6px;top:4px">
  <rect x="6" y="1" width="2" height="2" fill="#c8c8c8"/>
  <rect x="2" y="3.2" width="10" height="2" rx="0.8" fill="#c8c8c8"/>
  <rect x="2" y="6" width="10" height="8.5" fill="#c8c8c8"/>
  <rect x="4.5" y="9.5" width="2" height="2" fill="#2a2a2a"/>
  <rect x="7" y="7.5" width="2" height="2" fill="#2a2a2a"/>
  <rect x="6" y="15" width="2" height="2" fill="#c8c8c8"/>
</svg>
<div class="t" style="left:23px;top:6px;font-size:12.4px;line-height:17px;color:#c4c4c4;">New Shader Graph*</div>
<svg width="50" height="20" style="left:750px;top:2px">
  <rect x="5" y="4" width="2" height="2" fill="#c8c8c8"/>
  <rect x="5" y="8" width="2" height="2" fill="#c8c8c8"/>
  <rect x="5" y="12" width="2" height="2" fill="#c8c8c8"/>
  <rect x="19.5" y="4.5" width="9" height="9" fill="none" stroke="#c8c8c8" stroke-width="1"/>
  <rect x="19.5" y="4.5" width="9" height="2" fill="#c8c8c8"/>
  <path d="M36.5 5 L43.5 12 M43.5 5 L36.5 12" stroke="#c8c8c8" stroke-width="1.3"/>
</svg>
<div style="left:0;top:22px;width:800px;height:20px;background:#3c3c3c;"></div>
<div style="left:0;top:22px;width:1px;height:20px;background:#232323;"></div>
<div style="left:73px;top:22px;width:1px;height:20px;background:#232323;"></div>
<div style="left:79px;top:22px;width:1px;height:20px;background:#232323;"></div>
<div style="left:144px;top:22px;width:1px;height:20px;background:#232323;"></div>
<div style="left:150px;top:22px;width:1px;height:20px;background:#232323;"></div>
<div style="left:248px;top:22px;width:1px;height:20px;background:#232323;"></div>
<div style="left:318px;top:22px;width:1px;height:20px;background:#232323;"></div>
<div style="left:526px;top:22px;width:1px;height:20px;background:#232323;"></div>
<div style="left:601px;top:22px;width:1px;height:20px;background:#232323;"></div>
<div style="left:608px;top:22px;width:1px;height:20px;background:#232323;"></div>
<div style="left:706px;top:22px;width:1px;height:20px;background:#232323;"></div>
<div style="left:712px;top:22px;width:1px;height:20px;background:#232323;"></div>
<div class="t" style="left:4px;top:25px;font-size:12.3px;line-height:17px;color:#c4c4c4;">Save Asset</div>
<div class="t" style="left:84px;top:25px;font-size:12.3px;line-height:17px;color:#c4c4c4;">Save As...</div>
<div class="t" style="left:155px;top:25px;font-size:12.3px;line-height:17px;color:#c4c4c4;">Show In Project</div>
<div class="t" style="left:253px;top:25px;font-size:12.3px;line-height:17px;color:#7e7e7e;">Check Out</div>
<div class="t" style="left:350px;top:25px;font-size:12.3px;line-height:17px;color:#c4c4c4;">Color Mode</div>
<div style="left:421px;top:25px;width:99px;height:16px;background:#515151;border-radius:3px;"></div>
<div class="t" style="left:425px;top:25px;font-size:12.3px;line-height:17px;color:#c4c4c4;">&lt;None&gt;</div>
<svg width="12" height="8" style="left:505px;top:29px"><path d="M1 1 L10 1 L5.5 6.5 Z" fill="#c4c4c4"/></svg>
<div class="t" style="left:532px;top:25px;font-size:12.3px;line-height:17px;color:#c4c4c4;">Blackboard</div>
<div class="t" style="left:611px;top:25px;font-size:12.3px;line-height:17px;color:#c4c4c4;">Graph Inspector</div>
<div class="t" style="left:716px;top:25px;font-size:12.3px;line-height:17px;color:#c4c4c4;">Main Preview</div>
</div>

</body></html>
